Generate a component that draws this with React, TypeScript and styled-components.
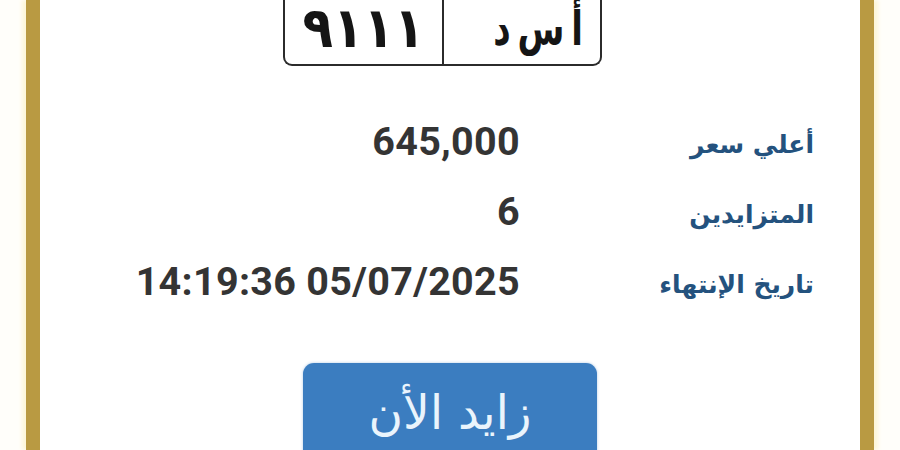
import React from "react";
import styled, { createGlobalStyle } from "styled-components";

const Global = createGlobalStyle`
  html, body { margin: 0; padding: 0; background: #fffefa; }
  body { width: 900px; height: 450px; overflow: hidden; }
`;

const Page = styled.div`
  width: 900px;
  height: 450px;
  display: flex;
  justify-content: center;
  overflow: hidden;
`;

const Frame = styled.div`
  width: 820px;
  height: 450px;
  background: #ffffff;
  border-left: 14px solid #b99a42;
  border-right: 14px solid #b99a42;
  box-shadow: -4px 0 4px #fdf6d8, 4px 0 4px #fdf6d8;
  display: flex;
  flex-direction: column;
  align-items: center;
  overflow: hidden;
`;

const Plate = styled.div`
  margin-right: 15px;
  width: 319px;
  height: 66px;
  flex-shrink: 0;
  border: 2.5px solid #2b2b2b;
  border-top: none;
  border-radius: 0 0 9px 9px;
  display: grid;
  grid-template-columns: 159px 1fr;
  box-sizing: border-box;
  background: #fff;
`;

const Cell = styled.div<{ $divider?: boolean }>`
  display: flex;
  align-items: flex-start;
  justify-content: center;
  border-right: ${(p) => (p.$divider ? "2px solid #2b2b2b" : "none")};
  font-family: "DejaVu Sans", sans-serif;
  font-weight: bold;
  color: #151515;
  overflow: hidden;
`;

const PlateDigits = styled.span`
  font-size: 50px;
  line-height: 1;
  letter-spacing: 1px;
  margin-top: 0px;
  transform: scaleY(1.12);
  transform-origin: top;
`;

const PlateLetters = styled.span`
  font-size: 34px;
  line-height: 1;
  margin-top: 4px;
  margin-left: 32px;
  word-spacing: -5px;
  transform: scaleY(1.4);
  transform-origin: top;
`;

const Info = styled.div`
  margin-top: 40px;
  width: 100%;
  box-sizing: border-box;
  padding-right: 46px;
  display: grid;
  grid-template-columns: 480px 1fr;
  grid-auto-rows: 70px;
  align-items: center;
`;

const Value = styled.div`
  text-align: right;
  font-family: Roboto, "Liberation Sans", sans-serif;
  font-weight: bold;
  font-size: 39.5px;
  color: #343434;
  letter-spacing: 0.3px;
`;

const Label = styled.div`
  text-align: right;
  direction: rtl;
  font-family: "DejaVu Sans", sans-serif;
  font-weight: bold;
  font-size: 25px;
  color: #24527e;
  padding-top: 6px;
`;

const BidButton = styled.button`
  margin-top: 47px;
  width: 294px;
  height: 110px;
  flex-shrink: 0;
  border: none;
  border-radius: 11px;
  background: #3b7dc0;
  box-shadow: 0 0 3px rgba(59, 125, 192, 0.4);
  color: #eaf4fc;
  font-family: "DejaVu Sans", sans-serif;
  font-size: 47px;
  display: flex;
  justify-content: center;
  align-items: flex-start;
  padding-top: 22px;
  direction: rtl;
`;

const rows = [
  { label: "أعلي سعر", value: "645,000" },
  { label: "المتزايدين", value: "6" },
  { label: "تاريخ الإنتهاء", value: "14:19:36 05/07/2025" },
];

export default function App() {
  return (
    <>
      <Global />
      <Page>
        <Frame>
          <Plate>
            <Cell $divider>
              <PlateDigits>٩١١١</PlateDigits>
            </Cell>
            <Cell>
              <PlateLetters>أ س د</PlateLetters>
            </Cell>
          </Plate>
          <Info>
            {rows.map((r) => (
              <React.Fragment key={r.label}>
                <Value>{r.value}</Value>
                <Label>{r.label}</Label>
              </React.Fragment>
            ))}
          </Info>
          <BidButton>زايد الأن</BidButton>
        </Frame>
      </Page>
    </>
  );
}
